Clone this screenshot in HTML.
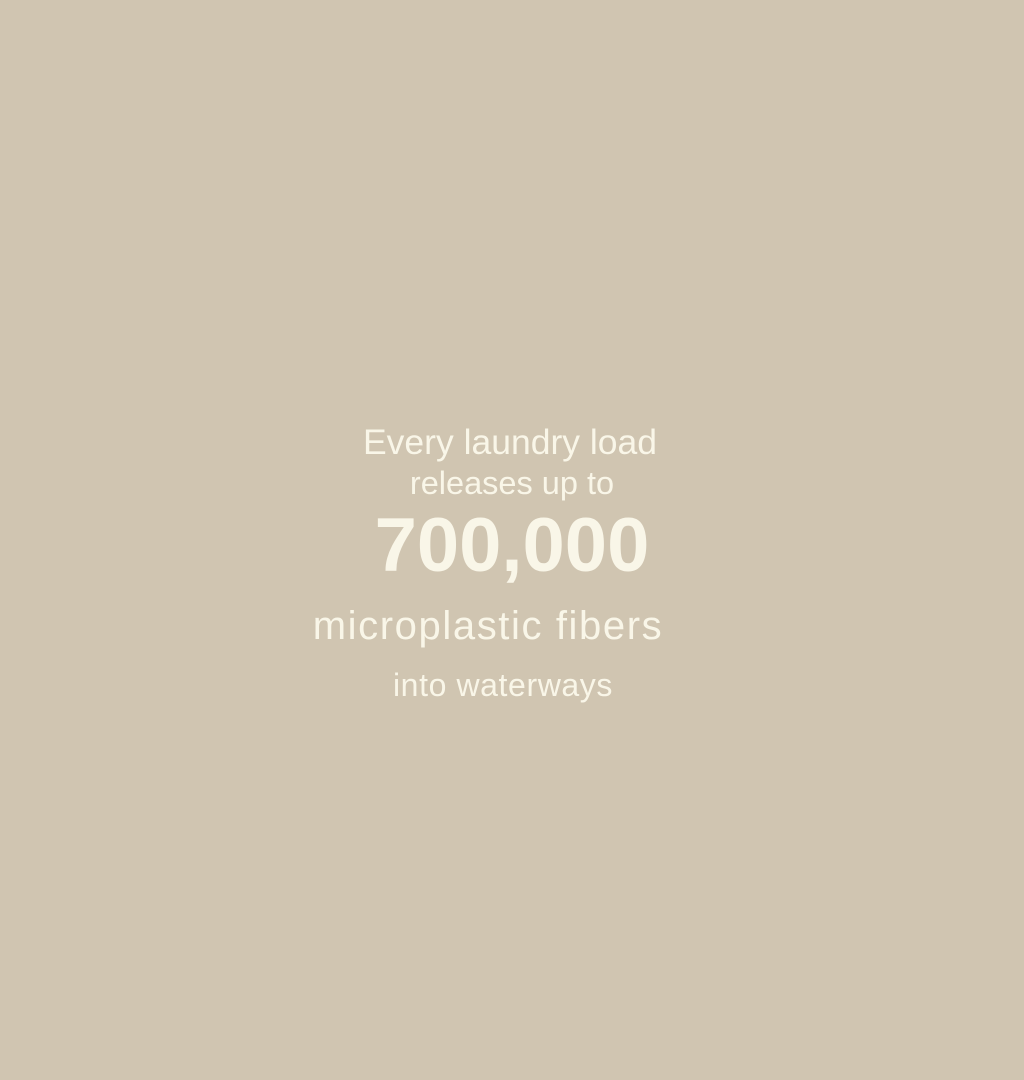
<!DOCTYPE html>
<html><head><style>
html,body{margin:0;padding:0}
body{width:1024px;height:1080px;background:#d0c5b1;position:relative;overflow:hidden;font-family:"Liberation Sans","DejaVu Sans",sans-serif;color:#f9f6e8}
.t{position:absolute;left:0;width:1024px;text-align:center;white-space:nowrap;line-height:1}
</style></head><body>
<div class="t" style="top:425px;font-size:35.5px;left:-2px">Every laundry load</div>
<div class="t" style="top:467px;font-size:32.5px">releases up to</div>
<div class="t" style="top:508px;font-size:76px;font-weight:bold">700,000</div>
<div class="t" style="top:606px;font-size:40px;letter-spacing:1.6px;left:-24px">microplastic fibers</div>
<div class="t" style="top:669px;font-size:32px;letter-spacing:0.6px;left:-9px">into waterways</div>
</body></html>
